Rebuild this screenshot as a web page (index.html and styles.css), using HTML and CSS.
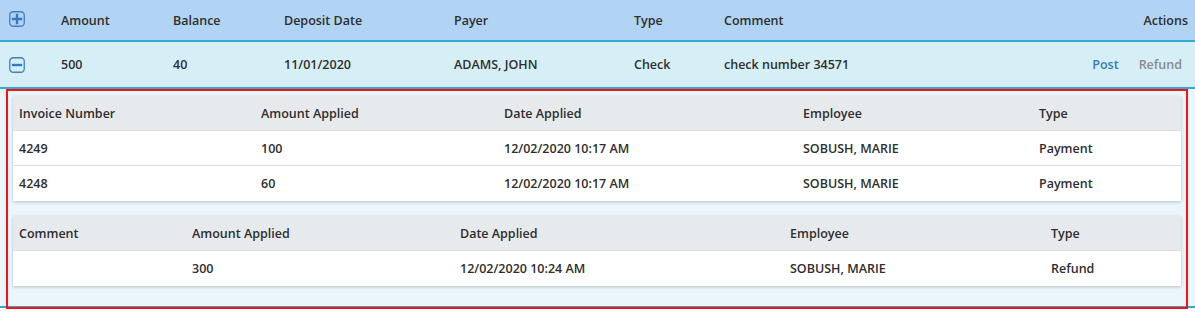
FILE: index.html
```html
<!DOCTYPE html>
<html>
<head>
<meta charset="utf-8">
<link rel="stylesheet" href="styles.css">
</head>
<body>
<div class="grid">
  <div class="row head">
    <div class="cell icon-cell">
      <span class="toggle"><svg width="16" height="16" viewBox="0 0 16 16"><rect x="0.75" y="0.75" width="14.5" height="14.5" rx="3.5" fill="none" stroke="#3f7fc4" stroke-width="1.3"/><path d="M8 4v8M4 8h8" stroke="#3a78bd" stroke-width="2.4" stroke-linecap="square"/></svg></span>
    </div>
    <div class="cell">Amount</div>
    <div class="cell">Balance</div>
    <div class="cell">Deposit Date</div>
    <div class="cell">Payer</div>
    <div class="cell">Type</div>
    <div class="cell">Comment</div>
    <div class="cell actions-h">Actions</div>
  </div>
  <div class="row data">
    <div class="cell icon-cell">
      <span class="toggle"><svg width="16" height="16" viewBox="0 0 16 16"><rect x="0.75" y="0.75" width="14.5" height="14.5" rx="3.5" fill="none" stroke="#3f7fc4" stroke-width="1.3"/><path d="M4 8h8" stroke="#3a78bd" stroke-width="2.4" stroke-linecap="square"/></svg></span>
    </div>
    <div class="cell">500</div>
    <div class="cell">40</div>
    <div class="cell">11/01/2020</div>
    <div class="cell">ADAMS, JOHN</div>
    <div class="cell">Check</div>
    <div class="cell">check number 34571</div>
    <div class="cell actions"><a class="post">Post</a><a class="refund">Refund</a></div>
  </div>
  <div class="detail">
    <div class="sub sub1">
      <div class="srow shead">
        <div>Invoice Number</div><div>Amount Applied</div><div>Date Applied</div><div>Employee</div><div>Type</div>
      </div>
      <div class="srow">
        <div>4249</div><div>100</div><div>12/02/2020 10:17 AM</div><div>SOBUSH, MARIE</div><div>Payment</div>
      </div>
      <div class="srow">
        <div>4248</div><div>60</div><div>12/02/2020 10:17 AM</div><div>SOBUSH, MARIE</div><div>Payment</div>
      </div>
    </div>
    <div class="sub sub2">
      <div class="srow shead">
        <div>Comment</div><div>Amount Applied</div><div>Date Applied</div><div>Employee</div><div>Type</div>
      </div>
      <div class="srow">
        <div></div><div>300</div><div>12/02/2020 10:24 AM</div><div>SOBUSH, MARIE</div><div>Refund</div>
      </div>
    </div>
    <div class="highlight"></div>
  </div>
</div>
</body>
</html>
```

FILE: styles.css
```css
html, body {
  margin: 0;
  padding: 0;
  background: #ffffff;
}
body {
  font-family: "Open Sans", "Noto Sans", sans-serif;
  font-weight: 600;
  font-size: 12.5px;
  color: #2e2e2e;
  width: 1195px;
  min-height: 315px;
}
.row {
  display: grid;
  grid-template-columns: 61px 112px 111px 170px 180px 90px 1fr auto;
  align-items: center;
}
.head {
  height: 40px;
  background: #b1d4f4;
  border-bottom: 2px solid #31a9d5;
}
.data {
  height: 45px;
  background: #d6eff7;
  border-bottom: 2px solid #31a9d5;
}
.icon-cell {
  padding-left: 9px;
  display: flex;
  align-items: center;
}
.toggle {
  display: block;
  width: 16px;
  height: 16px;
}
.toggle svg { display: block; }
.head .toggle { margin-top: -3px; }
.actions-h {
  padding-right: 7px;
  text-align: right;
}
.actions {
  padding-right: 13px;
  display: flex;
  gap: 20px;
}
.post {
  color: #337ab7;
}
.refund {
  color: #8a8a8a;
}
.detail {
  position: relative;
  background: #eaf6fc;
  padding: 7px 14px 20px 13px;
  border-bottom: 2px solid #31a9d5;
  display: flex;
  flex-direction: column;
  gap: 15px;
}
.sub {
  background: #ffffff;
  box-shadow: 0 1px 3px rgba(0, 0, 0, 0.22);
}
.srow {
  display: grid;
  height: 34px;
  align-items: center;
  padding-left: 6px;
  border-bottom: 1px solid #dcdee3;
}
.srow:last-child { border-bottom: none; height: 35px; }
.shead {
  background: #e7eaed;
}
.sub1 .srow {
  grid-template-columns: 242px 243px 299px 236px 1fr;
}
.sub2 .srow {
  grid-template-columns: 173px 268px 330px 261px 1fr;
}
.highlight {
  position: absolute;
  left: 6px;
  top: 0;
  bottom: -3px;
  width: 1178px;
  border: 2px solid #ff1010;
  z-index: 2;
  pointer-events: none;
}
```
